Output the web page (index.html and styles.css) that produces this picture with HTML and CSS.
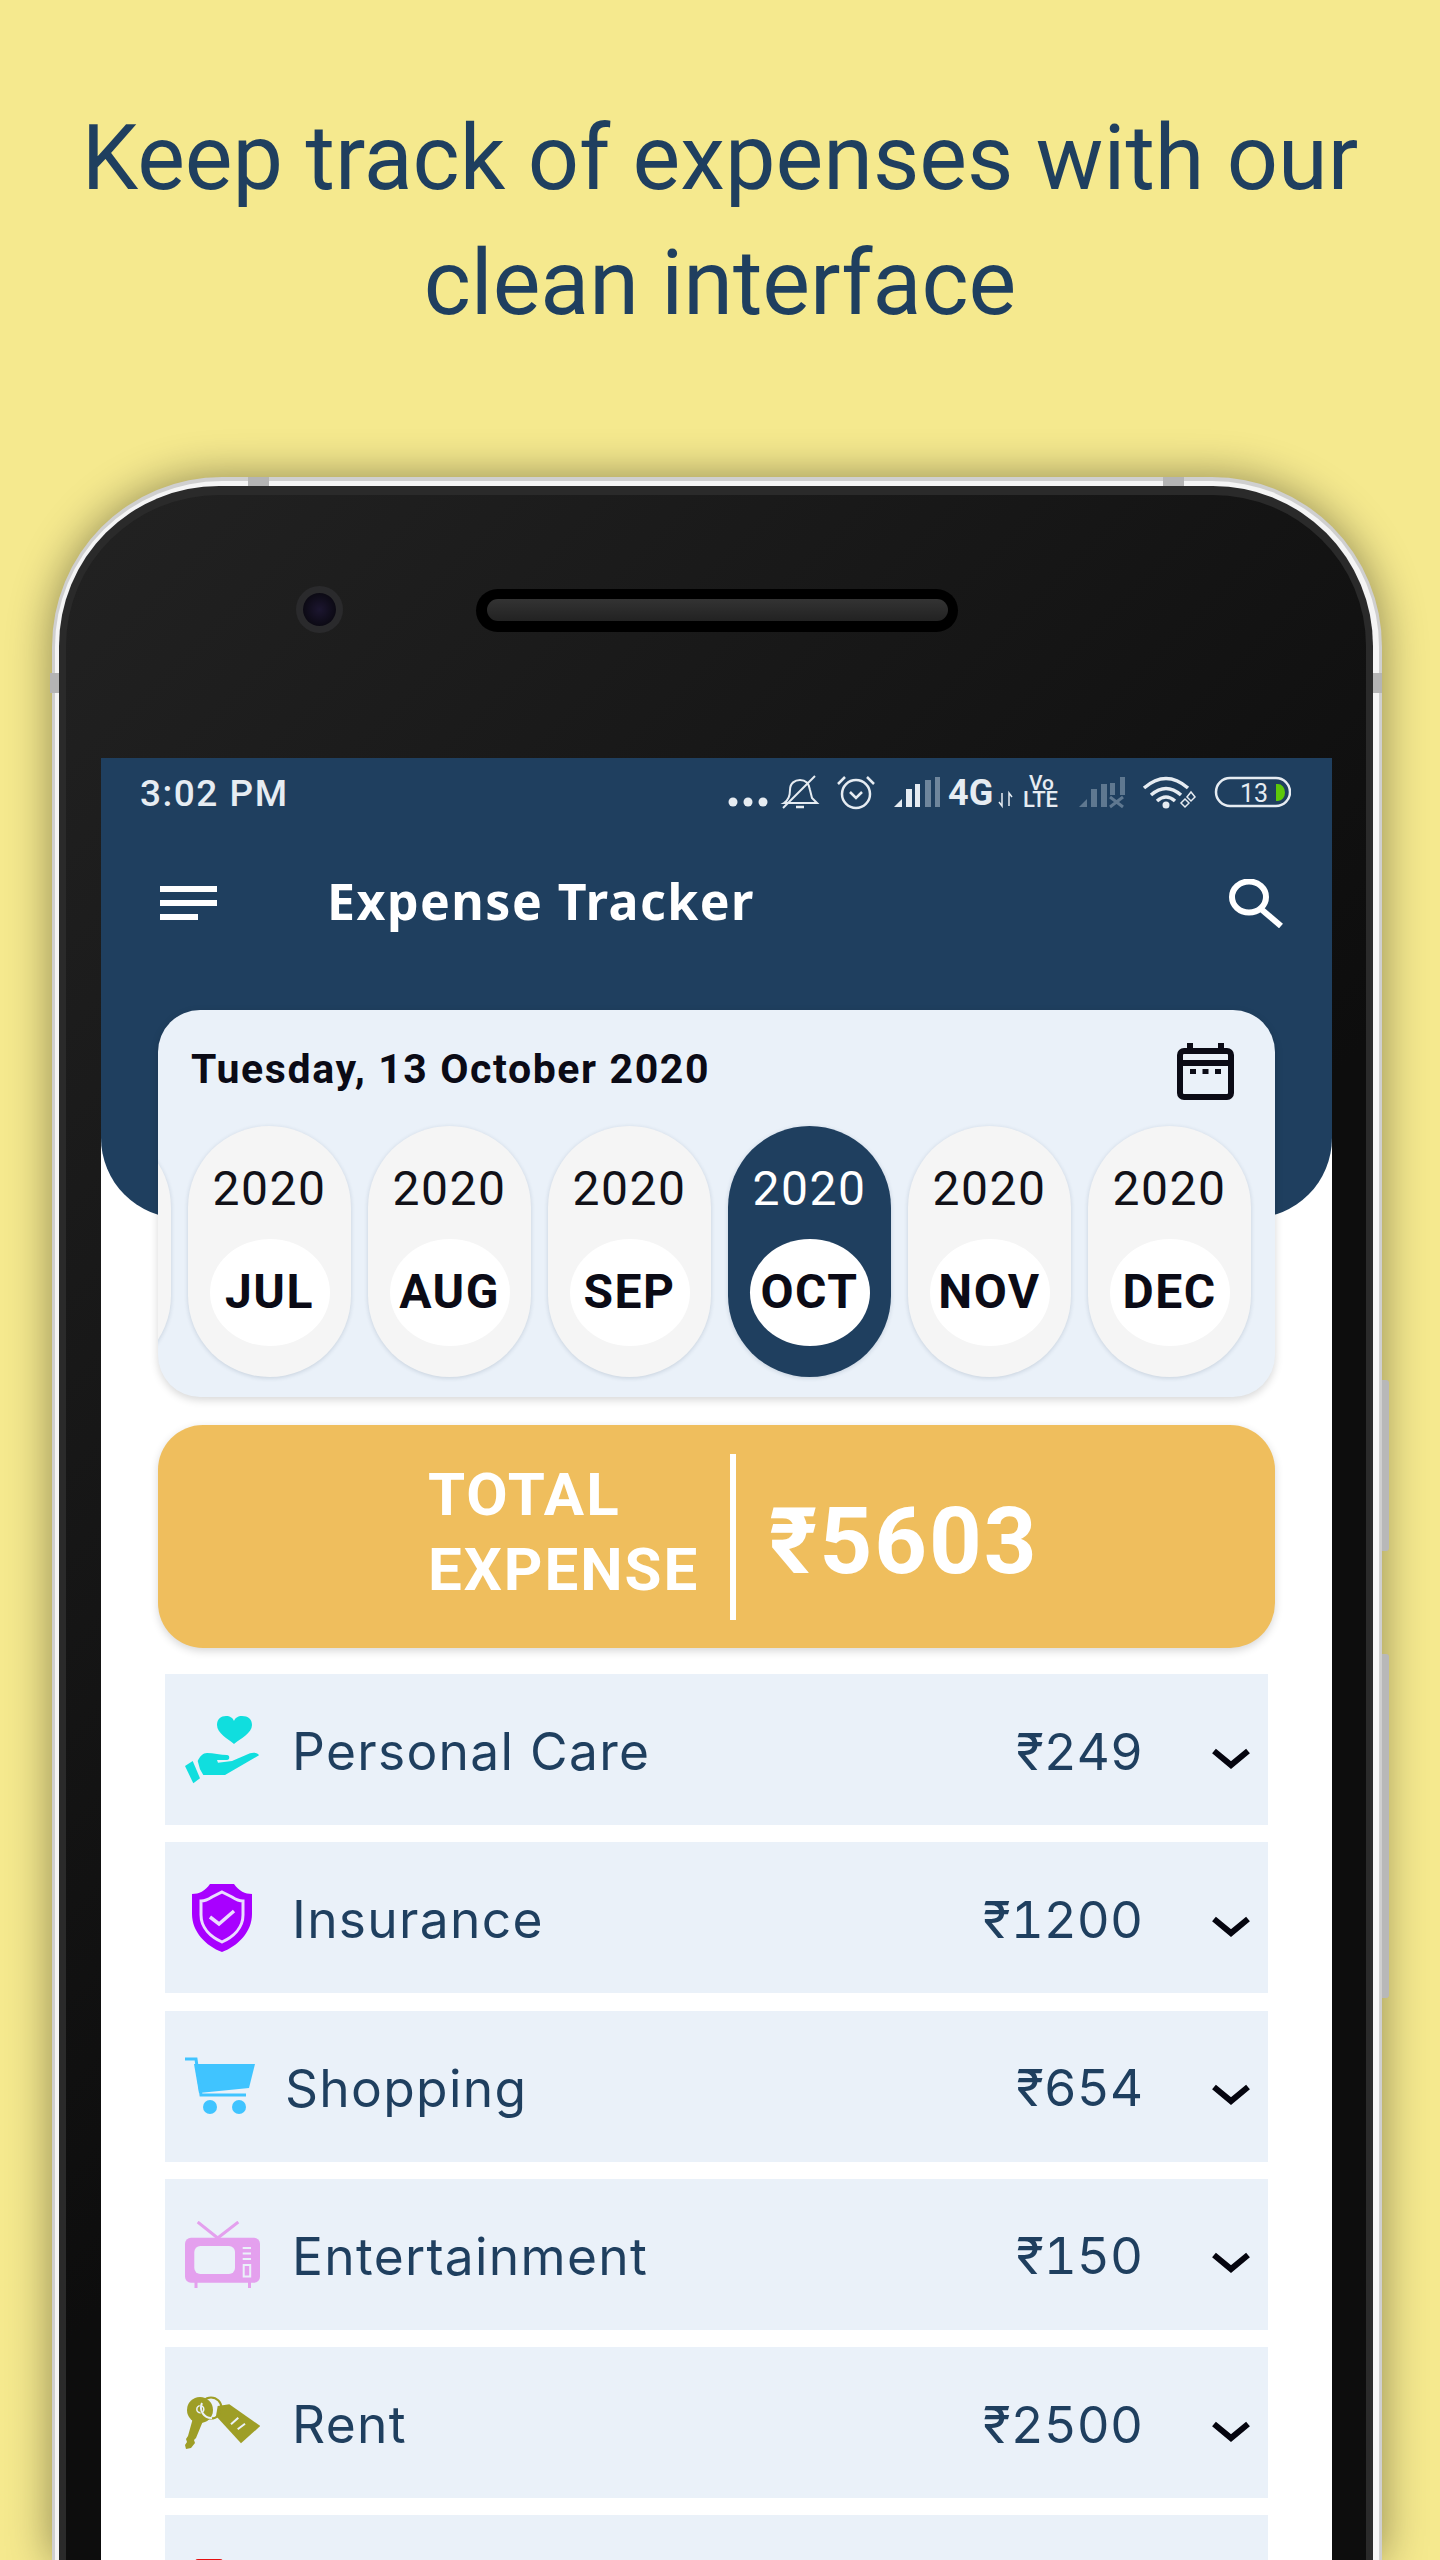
FILE: index.html
```html
<!DOCTYPE html>
<html lang="en">
<head>
    <meta charset="UTF-8">
    <meta name="viewport" content="width=device-width, initial-scale=1.0">
    <title>Expense Tracker</title>
    <link rel="stylesheet" href="styles.css">
</head>
<body>
<div class="page">
    <h1 class="headline">Keep track of expenses with our<br>clean interface</h1>

    <div class="phone">
        <span class="btn btn-top btn-top-left"></span>
        <span class="btn btn-top btn-top-right"></span>
        <span class="btn btn-notch btn-notch-left"></span>
        <span class="btn btn-notch btn-notch-right"></span>
        <span class="btn btn-side btn-power"></span>
        <span class="btn btn-side btn-volume"></span>

        <div class="bezel">
            <div class="earpiece-row">
                <div class="camera"><div class="lens"></div></div>
                <div class="speaker"><div class="grille"></div></div>
            </div>

            <div class="screen">
                <div class="app-header">
                    <div class="status-bar">
                        <span class="clock">3:02 PM</span>
                        <svg class="status-icons" width="563" height="56" viewBox="728 765 563 56">
                            <g fill="#e6ecf2">
                                <circle cx="733" cy="802" r="4.5"/>
                                <circle cx="748" cy="802" r="4.5"/>
                                <circle cx="763" cy="802" r="4.5"/>
                            </g>
                            <g fill="none" stroke="#e6ecf2" stroke-width="2">
                                <path d="M784 803C789 800 790 796 790 790C790 783 795 780 800 780C805 780 809 783 810 790L812 798L817 803Z"/>
                                <path d="M783 808L815 776"/>
                                <path d="M796 807h8" stroke-width="2.5"/>
                            </g>
                            <g fill="none" stroke="#e6ecf2" stroke-width="2.5">
                                <circle cx="856" cy="794" r="14"/>
                                <path d="M850 792l6 6l6-6"/>
                                <path d="M838 784l7-7M874 784l-7-7"/>
                            </g>
                            <g fill="#e6ecf2">
                                <path d="M894 807l8-8v8z"/>
                                <rect x="906" y="789" width="6" height="18"/>
                                <rect x="915" y="784" width="5" height="23"/>
                            </g>
                            <g fill="#6f869c">
                                <rect x="925" y="780" width="6" height="27"/>
                                <rect x="935" y="777" width="5" height="30"/>
                            </g>
                            <text class="net-big" x="948" y="805">4G</text>
                            <path d="M1002 793v13l-3-4M1009 806v-13l3 4" fill="none" stroke="#e6ecf2" stroke-width="1.5"/>
                            <text class="net-vo" x="1029" y="790">Vo</text>
                            <text class="net-small" x="1023" y="807">LTE</text>
                            <g fill="#5f7890">
                                <path d="M1079 807l8-8v8z"/>
                                <rect x="1091" y="789" width="6" height="18"/>
                                <rect x="1101" y="784" width="6" height="23"/>
                                <rect x="1110" y="783" width="5" height="12"/>
                                <rect x="1120" y="777" width="5" height="18"/>
                            </g>
                            <path d="M1110 797l13 10M1123 797l-13 10" stroke="#5f7890" stroke-width="3"/>
                            <g fill="none" stroke="#e6ecf2" stroke-width="3.5">
                                <path d="M1144 788Q1166 769 1188 788"/>
                                <path d="M1151 795Q1166 782 1181 795"/>
                                <path d="M1157 801Q1166 793 1175 801"/>
                            </g>
                            <circle cx="1166" cy="805" r="3.5" fill="#e6ecf2"/>
                            <path d="M1181 803l4 4l4-4l-4-4zM1187 797l4 4l4-4l-4-5z" fill="none" stroke="#e6ecf2" stroke-width="1.5"/>
                            <rect x="1216" y="778" width="74" height="28" rx="14" fill="none" stroke="#e6ecf2" stroke-width="2.5"/>
                            <text class="net-battery" x="1240" y="802">13</text>
                            <path d="M1276 784h2a7 8.5 0 0 1 0 17h-2z" fill="#5dc80a"/>
                        </svg>
                    </div>
                    <div class="toolbar">
                        <svg class="menu-icon" width="57" height="34" viewBox="0 0 57 34" fill="#fff">
                            <rect width="57" height="6"/>
                            <rect y="14" width="57" height="6"/>
                            <rect y="28" width="38" height="6"/>
                        </svg>
                        <span class="app-title">Expense Tracker</span>
                        <svg class="search-icon" width="54" height="49" viewBox="0 0 54 49" fill="none" stroke="#fff" stroke-width="6">
                            <ellipse cx="20" cy="18" rx="17" ry="15.5"/>
                            <path d="M32 30L52 47"/>
                        </svg>
                    </div>
                </div>

                <div class="content">
                    <div class="date-card">
                        <div class="date-head">
                            <span class="date-text">Tuesday, 13 October 2020</span>
                            <svg class="calendar-icon" width="57" height="57" viewBox="0 0 57 57" fill="none" stroke="#0b0b16" stroke-width="6">
                                <rect x="3" y="8" width="51" height="46" rx="4"/>
                                <path d="M3 20h51M13 0v8M44 0v8"/>
                                <path d="M13 28.5h6M25.5 28.5h6M38 28.5h6" stroke-width="5"/>
                            </svg>
                        </div>
                        <div class="months">
                            <div class="month"></div>
                            <div class="month"><span class="year">2020</span><span class="month-name">JUL</span></div>
                            <div class="month"><span class="year">2020</span><span class="month-name">AUG</span></div>
                            <div class="month"><span class="year">2020</span><span class="month-name">SEP</span></div>
                            <div class="month selected"><span class="year">2020</span><span class="month-name">OCT</span></div>
                            <div class="month"><span class="year">2020</span><span class="month-name">NOV</span></div>
                            <div class="month"><span class="year">2020</span><span class="month-name">DEC</span></div>
                        </div>
                    </div>

                    <div class="total-card">
                        <div class="total-label">TOTAL<br>EXPENSE</div>
                        <div class="total-divider"></div>
                        <div class="total-amount">₹5603</div>
                    </div>

                    <div class="expense-list">
                        <div class="expense-row">
                            <span class="row-icon">
                                <svg width="75" height="68" viewBox="0 0 75 68" fill="#10dede">
                                    <path d="M49 28C43 23 32 17 32 9C32 3 36 0 41 0C45 0 48 2 49 5C50 2 53 0 57 0C63 0 67 3 67 9C67 17 55 23 49 28Z"/>
                                    <path d="M0 50L7.7 45L15 62.3L8.3 67.3Z"/>
                                    <path d="M12.7 45C15 40 18 37 22 37C28 37 36 39 42 39C45 39 45 44 42 44H32L33 46.7L47 45L65 37.3C69 36 73 37 74 39.3L40 59H18.3L15 53.3Z"/>
                                </svg>
                            </span>
                            <span class="row-label">Personal Care</span>
                            <span class="row-amount">₹249</span>
                            <svg class="chevron" width="38" height="22" viewBox="0 0 38 22"><path d="M2 3L19 17L36 3" fill="none" stroke="#05050f" stroke-width="6"/></svg>
                        </div>
                        <div class="expense-row">
                            <span class="row-icon icon-shield">
                                <svg width="60" height="68" viewBox="0 0 60 68">
                                    <path fill="#a800ff" d="M0 10C7 10 13 7 18 0H42C47 7 53 10 60 10V30C60 48 46 62 30 68C14 62 0 48 0 30Z"/>
                                    <path fill="none" stroke="#eadcff" stroke-width="3" d="M30 8L40 13C43 15 47 17 51 17V31C51 44 41 53 30 58C19 53 9 44 9 31V17C13 17 17 15 20 13Z"/>
                                    <path fill="none" stroke="#eadcff" stroke-width="3.5" d="M18 33L27 40L42 27"/>
                                </svg>
                            </span>
                            <span class="row-label">Insurance</span>
                            <span class="row-amount">₹1200</span>
                            <svg class="chevron" width="38" height="22" viewBox="0 0 38 22"><path d="M2 3L19 17L36 3" fill="none" stroke="#05050f" stroke-width="6"/></svg>
                        </div>
                        <div class="expense-row">
                            <span class="row-icon">
                                <svg width="71" height="58" viewBox="0 0 71 58" fill="#40c4ff">
                                    <path d="M9 7H70L64 31L14 36Z"/>
                                    <path d="M0 2H11L16 38H61" fill="none" stroke="#40c4ff" stroke-width="3"/>
                                    <circle cx="25" cy="50" r="7"/>
                                    <circle cx="54" cy="50" r="7"/>
                                </svg>
                            </span>
                            <span class="row-label label-shopping">Shopping</span>
                            <span class="row-amount">₹654</span>
                            <svg class="chevron" width="38" height="22" viewBox="0 0 38 22"><path d="M2 3L19 17L36 3" fill="none" stroke="#05050f" stroke-width="6"/></svg>
                        </div>
                        <div class="expense-row">
                            <span class="row-icon">
                                <svg width="75" height="67" viewBox="0 0 75 67" fill="#e4a0ee">
                                    <path d="M12.7 1L32.7 17L53.3 1" fill="none" stroke="#e4a0ee" stroke-width="3"/>
                                    <rect y="16.7" width="75" height="45" rx="6"/>
                                    <rect x="9.5" y="60" width="3" height="7"/>
                                    <rect x="63" y="60" width="3" height="7"/>
                                    <rect x="9.3" y="25" width="40.7" height="28" rx="6" fill="#eaf1f9"/>
                                    <path d="M57.7 27h8.3M57.7 32.5h8.3M57.7 38h8.3" stroke="#eaf1f9" stroke-width="2"/>
                                    <rect x="58.7" y="44" width="6.5" height="11.5" fill="none" stroke="#eaf1f9" stroke-width="2"/>
                                </svg>
                            </span>
                            <span class="row-label">Entertainment</span>
                            <span class="row-amount">₹150</span>
                            <svg class="chevron" width="38" height="22" viewBox="0 0 38 22"><path d="M2 3L19 17L36 3" fill="none" stroke="#05050f" stroke-width="6"/></svg>
                        </div>
                        <div class="expense-row">
                            <span class="row-icon">
                                <svg width="75" height="53" viewBox="0 0 75 53" fill="#9e9e26">
                                    <circle cx="15" cy="14" r="13"/>
                                    <path d="M8 22L18 25L11 42L9 44L10 47L6 52L1 53L0 49L2 46L1 43L3 40Z"/>
                                    <circle cx="15.3" cy="13.3" r="3.5" fill="none" stroke="#eaf1f9" stroke-width="1.5"/>
                                    <path d="M32.7 10L44.3 8.3L75.3 30L56 47.3L31 20Z"/>
                                    <path d="M46 28.3L53.3 21.7M52.7 33.3L60 27.7" stroke="#eaf1f9" stroke-width="2"/>
                                    <circle cx="26" cy="12" r="10.5" fill="none" stroke="#9e9e26" stroke-width="2"/>
                                    <path d="M17 7A10.5 10.5 0 0 0 27 22" fill="none" stroke="#eaf1f9" stroke-width="2"/>
                                </svg>
                            </span>
                            <span class="row-label">Rent</span>
                            <span class="row-amount">₹2500</span>
                            <svg class="chevron" width="38" height="22" viewBox="0 0 38 22"><path d="M2 3L19 17L36 3" fill="none" stroke="#05050f" stroke-width="6"/></svg>
                        </div>
                        <div class="expense-row">
                            <span class="row-icon icon-last">
                                <svg width="60" height="66" viewBox="0 0 60 66"><rect x="10" y="1" width="28" height="30" rx="3" fill="#e81010"/></svg>
                            </span>
                        </div>
                    </div>
                </div>
            </div>
        </div>
    </div>
</div>
</body>
</html>
```

FILE: styles.css
```css
html, body {
    margin: 0;
    padding: 0;
}
body {
    background: #f5e98e;
    font-family: Roboto, sans-serif;
}
.page {
    height: 2560px;
    overflow: hidden;
}
.headline {
    margin: 0;
    height: 477px;
    padding-top: 96px;
    box-sizing: border-box;
    font-size: 90px;
    font-weight: 400;
    line-height: 125px;
    text-align: center;
    color: #1f3f5f;
}

/* phone frame */
.phone {
    position: relative;
    margin-left: 52px;
    width: 1330px;
    box-sizing: border-box;
    padding: 5px 6px 0 4px;
    border-style: solid;
    border-width: 4px 3px 0 3px;
    border-color: #cfcfcf;
    border-radius: 170px 170px 0 0;
    background: #f4f4f4;
    box-shadow: 0 0 44px rgba(0, 0, 0, 0.42);
}
.bezel {
    border-style: solid;
    border-width: 9px 7px 0 7px;
    border-color: #2a2a2a;
    border-radius: 160px 160px 0 0;
    background: linear-gradient(135deg, #222222 0%, #0d0d0d 55%);
    padding: 0 34px 0 35px;
}
.btn {
    position: absolute;
    background: #b4b4b4;
}
.btn-top {
    top: -4px;
    width: 21px;
    height: 9px;
}
.btn-top-left { left: 193px; }
.btn-top-right { left: 1108px; }
.btn-notch {
    top: 192px;
    width: 9px;
    height: 20px;
}
.btn-notch-left { left: -5px; }
.btn-notch-right { right: -3px; }
.btn-side {
    right: -10px;
    width: 7px;
    background: #b8b8b8;
    border-radius: 0 3px 3px 0;
}
.btn-power { top: 899px; height: 171px; }
.btn-volume { top: 1173px; height: 344px; }

.earpiece-row {
    position: relative;
    height: 263px;
}
.camera {
    position: absolute;
    left: 195px;
    top: 91px;
    width: 47px;
    height: 47px;
    box-sizing: border-box;
    padding: 7px;
    border-radius: 50%;
    background: #2a2a2c;
}
.lens {
    width: 33px;
    height: 33px;
    border-radius: 50%;
    background: radial-gradient(circle, #1c1630 0%, #0c0a14 70%);
}
.speaker {
    position: absolute;
    left: 375px;
    top: 94px;
    width: 482px;
    height: 43px;
    box-sizing: border-box;
    padding: 10px 10px 0 11px;
    border-radius: 22px;
    background: #000000;
}
.grille {
    height: 22px;
    border-radius: 11px;
    background: linear-gradient(#333333, #222222);
}

/* app screen */
.screen {
    width: 1231px;
    background: #ffffff;
    height: 1802px;
}
.app-header {
    height: 460px;
    background: #1f3f5f;
    border-radius: 0 0 80px 80px;
}
.status-bar {
    display: flex;
    justify-content: space-between;
    align-items: flex-start;
    height: 88px;
    box-sizing: border-box;
    padding: 7px 41px 0 39px;
}
.clock {
    margin-top: 11px;
    font-size: 37px;
    font-weight: 500;
    line-height: 36px;
    letter-spacing: 1.5px;
    color: #e6ecf2;
}
.net-big {
    font: 700 36px Roboto, sans-serif;
    fill: #e6ecf2;
}
.net-vo {
    font: 500 21px Roboto, sans-serif;
    fill: #e6ecf2;
}
.net-small {
    font: 500 22px Roboto, sans-serif;
    fill: #e6ecf2;
}
.net-battery {
    font: 400 25px Roboto, sans-serif;
    fill: #e6ecf2;
}
.toolbar {
    display: flex;
    align-items: center;
    height: 114px;
    padding: 0 49px 0 59px;
}
.app-title {
    margin: 0 0 5px 110px;
    font-family: "Noto Sans", sans-serif;
    font-size: 50px;
    font-weight: 700;
    letter-spacing: 1.5px;
    color: #ffffff;
}
.search-icon {
    margin-left: auto;
}

.content {
    position: relative;
    margin-top: -208px;
    padding: 0 57px;
}

/* date + month strip */
.date-card {
    height: 387px;
    box-sizing: border-box;
    overflow: hidden;
    border-radius: 42px;
    background: #eaf1f9;
    box-shadow: 0 3px 8px rgba(0, 0, 0, 0.16);
}
.date-head {
    display: flex;
    justify-content: space-between;
    height: 116px;
    box-sizing: border-box;
    padding: 33px 41px 0 33px;
}
.date-text {
    margin-top: 3px;
    font-size: 41px;
    font-weight: 700;
    line-height: 46px;
    letter-spacing: 1.6px;
    color: #0b0b16;
}
.months {
    display: flex;
    justify-content: flex-end;
    gap: 17px;
    padding-right: 24px;
}
.month {
    display: flex;
    flex: none;
    flex-direction: column;
    align-items: center;
    width: 163px;
    height: 251px;
    border-radius: 82px;
    background: #f5f5f5;
    box-shadow: 0 1px 4px rgba(31, 63, 95, 0.18);
}
.year {
    margin-top: 36px;
    font-size: 48px;
    line-height: 54px;
    letter-spacing: 1.5px;
    color: #111118;
}
.month-name {
    display: flex;
    align-items: center;
    justify-content: center;
    width: 120px;
    height: 107px;
    box-sizing: border-box;
    padding-bottom: 3px;
    margin-top: 23px;
    border-radius: 50%;
    background: #ffffff;
    font-size: 48px;
    font-weight: 700;
    letter-spacing: 1.5px;
    color: #0b0b16;
}
.month.selected {
    background: #1f3f5f;
}
.month.selected .year {
    color: #ffffff;
}

/* total */
.total-card {
    display: flex;
    align-items: center;
    height: 223px;
    margin-top: 28px;
    padding-left: 270px;
    border-radius: 45px;
    background: #efbe5d;
    box-shadow: 0 3px 8px rgba(0, 0, 0, 0.16);
    color: #ffffff;
}
.total-label {
    width: 302px;
    margin-bottom: 10px;
    font-size: 60px;
    font-weight: 700;
    line-height: 75px;
    letter-spacing: 2px;
}
.total-divider {
    width: 6px;
    height: 166px;
    background: #ffffff;
}
.total-amount {
    margin: 10px 0 0 33px;
    font-size: 92px;
    font-weight: 700;
    letter-spacing: 2px;
}

/* expense rows */
.expense-list {
    display: flex;
    flex-direction: column;
    gap: 17.3px;
    margin: 26px 7px 0;
}
.expense-row {
    display: flex;
    flex: none;
    align-items: center;
    height: 151px;
    padding: 0 18px 0 20px;
    background: #eaf1f9;
    color: #1f3f5f;
}
.row-icon {
    display: flex;
    flex: none;
    width: 75px;
}
.icon-shield {
    padding-left: 7px;
    box-sizing: border-box;
}
.row-label {
    margin: 3px 0 0 32px;
    font-family: Inter, sans-serif;
    font-size: 51.5px;
    letter-spacing: 1.3px;
}
.label-shopping {
    margin-left: 25px;
}
.row-amount {
    margin: 3px 0 0 auto;
    font-family: Inter, sans-serif;
    font-size: 51px;
    font-variant-numeric: tabular-nums;
}
.chevron {
    flex: none;
    margin: 18px 0 0 69px;
}
```
